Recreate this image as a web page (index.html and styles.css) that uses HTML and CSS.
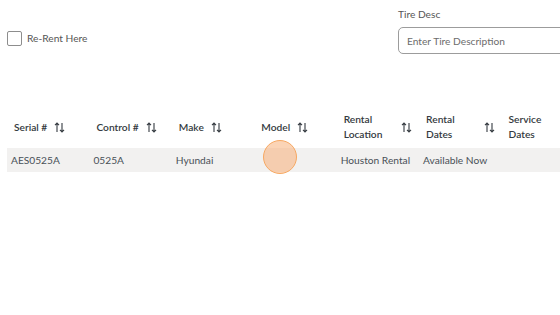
FILE: index.html
```html
<!DOCTYPE html>
<html lang="en">
<head>
    <meta charset="UTF-8">
    <meta name="viewport" content="width=device-width, initial-scale=1.0">
    <title>Re-Rent Search</title>
    <link rel="stylesheet" href="styles.css">
</head>
<body>
    <div class="filters">
        <label class="check-field">
            <span class="checkbox"></span>
            <span>Re-Rent Here</span>
        </label>
        <div class="text-field">
            <label for="tireDesc">Tire Desc</label>
            <input id="tireDesc" type="text" placeholder="Enter Tire Description">
        </div>
    </div>

    <div class="table-wrap">
        <table class="units">
            <thead>
                <tr>
                    <th><div class="th-inner"><span>Serial #</span><svg class="sort" viewBox="0 0 11 11"><path d="M3 10V1M1 3.2L3 1L5 3.2M8 1V10M6 7.8L8 10L10 7.8"/></svg></div></th>
                    <th><div class="th-inner"><span>Control #</span><svg class="sort" viewBox="0 0 11 11"><path d="M3 10V1M1 3.2L3 1L5 3.2M8 1V10M6 7.8L8 10L10 7.8"/></svg></div></th>
                    <th><div class="th-inner"><span>Make</span><svg class="sort" viewBox="0 0 11 11"><path d="M3 10V1M1 3.2L3 1L5 3.2M8 1V10M6 7.8L8 10L10 7.8"/></svg></div></th>
                    <th><div class="th-inner"><span>Model</span><svg class="sort" viewBox="0 0 11 11"><path d="M3 10V1M1 3.2L3 1L5 3.2M8 1V10M6 7.8L8 10L10 7.8"/></svg></div></th>
                    <th><div class="th-inner"><span>Rental Location</span><svg class="sort" viewBox="0 0 11 11"><path d="M3 10V1M1 3.2L3 1L5 3.2M8 1V10M6 7.8L8 10L10 7.8"/></svg></div></th>
                    <th><div class="th-inner"><span>Rental Dates</span><svg class="sort" viewBox="0 0 11 11"><path d="M3 10V1M1 3.2L3 1L5 3.2M8 1V10M6 7.8L8 10L10 7.8"/></svg></div></th>
                    <th><div class="th-inner"><span>Service Dates</span><svg class="sort" viewBox="0 0 11 11"><path d="M3 10V1M1 3.2L3 1L5 3.2M8 1V10M6 7.8L8 10L10 7.8"/></svg></div></th>
                </tr>
            </thead>
            <tbody>
                <tr>
                    <td>AES0525A</td>
                    <td>0525A</td>
                    <td>Hyundai</td>
                    <td></td>
                    <td>Houston Rental</td>
                    <td>Available Now</td>
                    <td></td>
                </tr>
            </tbody>
        </table>
        <div class="click-dot"></div>
    </div>
</body>
</html>
```

FILE: styles.css
```css
body {
    margin: 0;
    width: 560px;
    height: 315px;
    overflow: hidden;
    font-family: Lato, "Noto Sans", sans-serif;
    font-size: 10.2px;
    color: #495057;
    background: #ffffff;
}
.filters {
    display: flex;
    padding: 7px 0 0 7px;
}
.check-field {
    flex: none;
    display: flex;
    align-items: center;
    gap: 5px;
    width: 391px;
    margin-top: 23px;
    height: 16px;
    color: #555;
}
.checkbox {
    width: 13px;
    height: 13px;
    border: 1px solid #8d8d8d;
    border-radius: 2px;
    background: #fff;
}
.text-field {
    flex: none;
}
.text-field label {
    display: block;
    line-height: 14px;
    margin-bottom: 6px;
    color: #555;
}
.text-field input {
    box-sizing: border-box;
    width: 200px;
    height: 27px;
    padding: 0 8px;
    border: 1px solid #9c9c9c;
    border-radius: 5px;
    font: inherit;
    color: #495057;
}
.text-field input::placeholder {
    color: #6c6c6c;
}
.table-wrap {
    position: relative;
    margin: 52px 0 0 7px;
}
.units {
    border-collapse: collapse;
    table-layout: fixed;
    width: 577px;
}
.units th {
    padding: 6px 7px;
    text-align: left;
    font-weight: 600;
    color: #343a40;
    line-height: 15px;
}
.th-inner {
    display: flex;
    align-items: center;
}
.sort {
    flex: none;
    width: 11px;
    height: 11px;
    margin-left: 7px;
    fill: none;
    stroke: #343a40;
    stroke-width: 1.1;
}
.units tbody tr {
    background: #f2f1f0;
}
.units td {
    padding: 4px 4px;
    line-height: 16px;
    white-space: nowrap;
}
.click-dot {
    position: absolute;
    left: 256px;
    top: 34px;
    width: 32px;
    height: 32px;
    border: 1.5px solid #f7a862;
    border-radius: 50%;
    background: rgba(247, 170, 110, 0.5);
}
```
